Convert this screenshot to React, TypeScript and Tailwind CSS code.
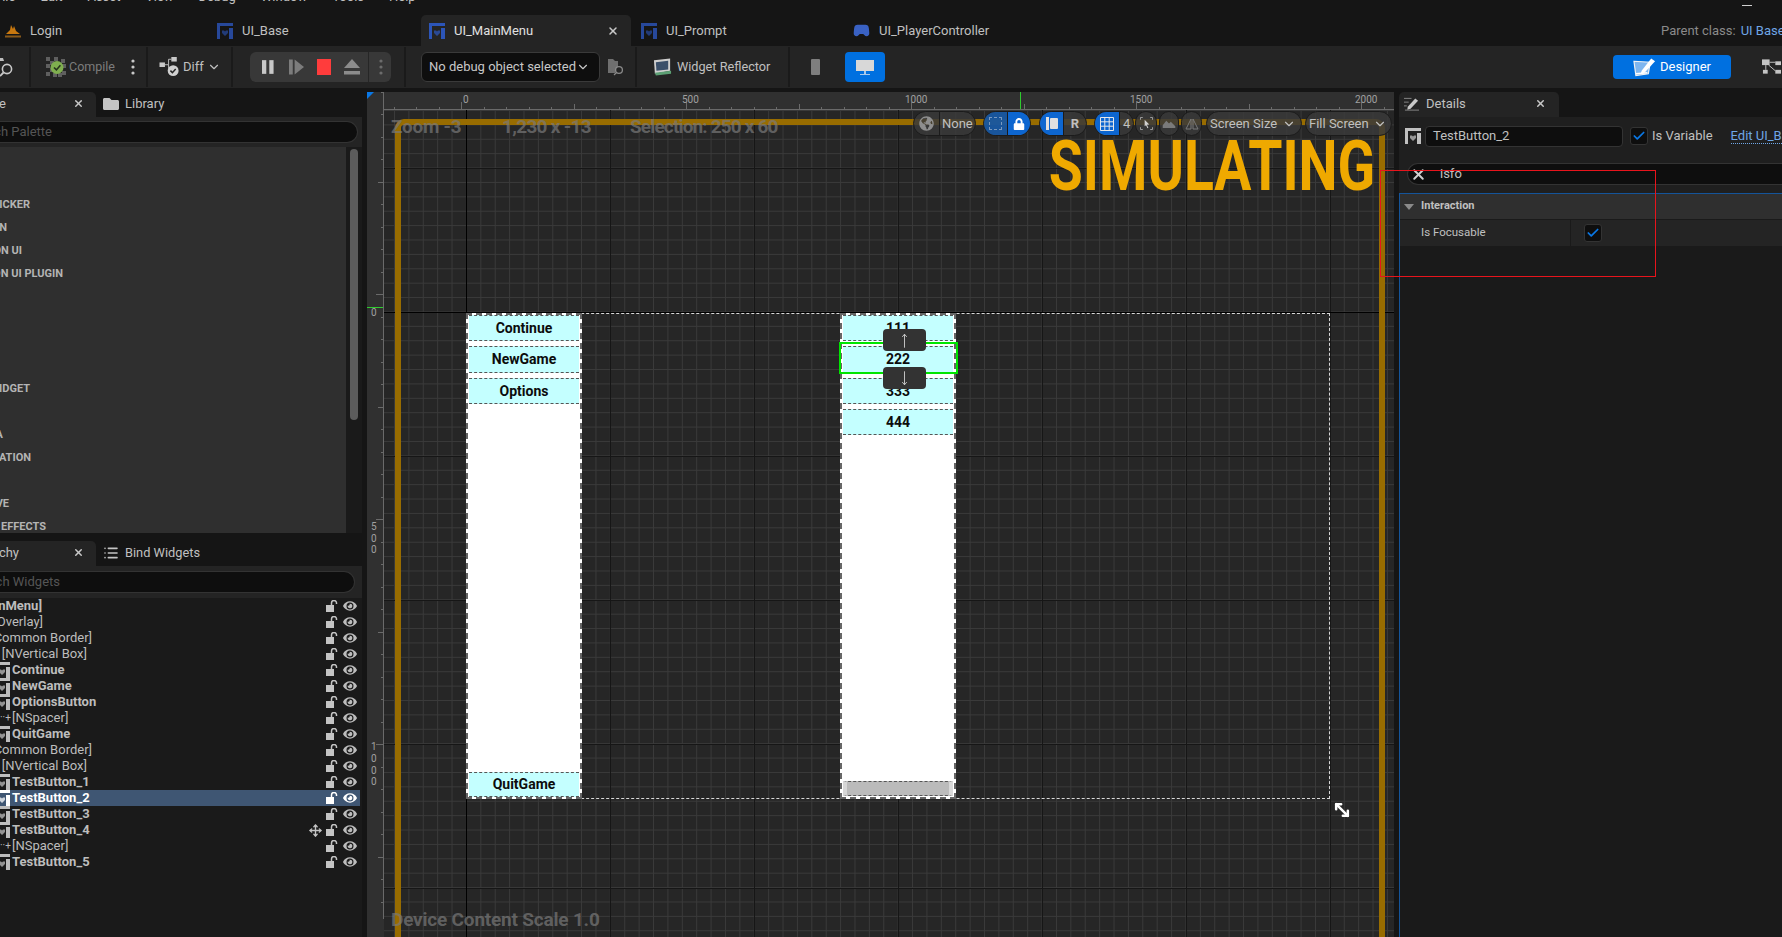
import React from "react";
import { Check, ChevronDown, Gamepad2, List, Move, MoveDiagonal2, X } from "lucide-react";
import { FaEye, FaFolder, FaGlobeAmericas, FaLock } from "react-icons/fa";

const WidgetIcon = ({ color, className }: { color: string; className?: string }) => (
  <svg viewBox="0 0 16 16" className={className} fill={color}>
    <rect x="0" y="0" width="16" height="3" />
    <rect x="0" y="3" width="3" height="13" />
    <rect x="12" y="5" width="4" height="11" />
    <path d="M5 7.5h2l1 1 1-1h2v2.5l-3 3-3-3z" opacity="0.75" />
  </svg>
);

const LoginIcon = () => (
  <svg viewBox="0 0 16 14" className="h-[14px] w-[16px] shrink-0">
    <path d="M1 10 5 6l1-5 2 4 1-3 2 5 4 3z" fill="#c8780f" />
    <rect x="0" y="11.5" width="16" height="2" fill="#8a5a1a" />
  </svg>
);

const OpenLock = ({ color }: { color: string }) => (
  <svg viewBox="0 0 12 12" className="h-[12px] w-[12px] shrink-0">
    <rect x="0" y="5" width="8" height="7" fill={color} />
    <path d="M5.500 5V3a2.500 2.500 0 0 1 5 0v1" fill="none" stroke={color} strokeWidth="1.5" />
  </svg>
);

const TopTab = ({ label, icon, width, active }: { label: string; icon: React.ReactNode; width: string; active?: boolean }) => (
  <div className={`${width} flex h-full shrink-0 items-center gap-[9px] rounded-t-[5px] pl-[8px] ${active ? "bg-[#242424] text-[#e0e0e0]" : "text-[#c0c0c0]"}`}>
    {icon}
    <span className="whitespace-nowrap">{label}</span>
    {active && <X size={12} strokeWidth={3} className="ml-auto mr-[12px] text-[#c8c8c8]" />}
  </div>
);

const Sep = () => <div className="h-[40px] w-[2px] shrink-0 bg-[#1a1a1a]" />;

const CompileIcon = () => (
  <svg viewBox="0 0 20 20" className="h-[20px] w-[20px] shrink-0">
    {[[0, 0], [8, 0], [15, 2], [0, 7], [4, 4], [4, 11], [0, 15], [7, 16], [12, 16], [16, 14], [16, 7]].map(([x, y], i) => (
      <rect key={i} x={x} y={y} width="4" height="4" fill="#5f5f5f" />
    ))}
    <circle cx="11" cy="10.5" r="6.5" fill="#7fae4f" />
    <path d="M8 10.5l2.4 2.4 4-4.6" fill="none" stroke="#26331c" strokeWidth="1.6" />
  </svg>
);

const DiffIcon = () => (
  <svg viewBox="0 0 22 22" className="h-[20px] w-[21px] shrink-0">
    <rect x="0" y="6" width="6" height="5" fill="#c8c8c8" />
    <rect x="13" y="0" width="6" height="5" fill="#c8c8c8" />
    <path d="M6 8.5h4V2.5h3M10 8.5v4" fill="none" stroke="#c8c8c8" />
    <circle cx="15" cy="15" r="6" fill="#d0d0d0" />
    <path d="M12 15l2.2 2.2 3.6-4" fill="none" stroke="#242424" strokeWidth="1.6" />
  </svg>
);

const Dots = ({ color }: { color: string }) => (
  <svg viewBox="0 0 4 16" className="h-[16px] w-[4px] shrink-0" fill={color}>
    <circle cx="2" cy="2" r="1.6" />
    <circle cx="2" cy="8" r="1.6" />
    <circle cx="2" cy="14" r="1.6" />
  </svg>
);

const FolderSearch = () => (
  <svg viewBox="0 0 16 18" className="h-[18px] w-[16px] shrink-0">
    <path d="M0 1h5l2 2h3v6l-3 6H0z" fill="#6f6f6f" />
    <circle cx="11" cy="12" r="3.4" fill="#242424" stroke="#8a8a8a" strokeWidth="1.3" />
    <path d="M8.5 14.5 6 17" stroke="#8a8a8a" strokeWidth="1.3" />
  </svg>
);

const ReflectorIcon = () => (
  <svg viewBox="0 0 20 18" className="h-[18px] w-[19px] shrink-0">
    <path d="M1 2l17-2v13l-16 3z" fill="#cfcfcf" />
    <path d="M3 4l13-1.5v9L3.6 13z" fill="#3a4f6a" />
    <path d="M2 15l17-2 0 3-16 2z" fill="#5ca074" />
  </svg>
);

const DesignerIcon = () => (
  <svg viewBox="0 0 24 20" className="h-[20px] w-[23px] shrink-0">
    <path d="M1 4l17 1-2 12-13 2z" fill="#7fb6ef" stroke="#f2f2f2" strokeWidth="1.2" />
    <path d="M9 14 19 1l4 3-11 12-4 1z" fill="#ffffff" />
    <path d="M3 17l12-1" stroke="#ffffff" strokeWidth="1.4" />
  </svg>
);

const GraphIcon = () => (
  <svg viewBox="0 0 20 16" className="h-[16px] w-[19px] shrink-0" fill="#c4c4c4">
    <rect x="0" y="0" width="8" height="6" />
    <rect x="14" y="2" width="6" height="4" />
    <rect x="14" y="11" width="6" height="4" />
    <rect x="1" y="11" width="5" height="4" />
    <path d="M8 3h6M4 6v5M7 6l7 6" stroke="#c4c4c4" fill="none" />
  </svg>
);

const PanelTab = ({ label, end }: { label: string; end: string }) => (
  <div className="flex h-full w-[96px] shrink-0 items-center rounded-tr-[5px] bg-[#242424] pb-[2px]">
    <div className={`flex ${end} shrink-0 justify-end whitespace-nowrap text-[#c0c0c0]`}>{label}</div>
    <X size={11} strokeWidth={3.2} className="ml-auto mr-[12px] text-[#c8c8c8]" />
  </div>
);

const paletteRows: [string, string][] = [
  ["", ""], ["", ""],
  ["COLOR PICKER", "w-[30px]"],
  ["COMMON", "w-[7px]"],
  ["COMMON UI", "w-[22px]"],
  ["COMMON UI PLUGIN", "w-[63px]"],
  ["", ""], ["", ""], ["", ""], ["", ""],
  ["WIDGET", "w-[30px]"],
  ["", ""],
  ["MEDIA", "w-[3px]"],
  ["OPTIMIZATION", "w-[31px]"],
  ["", ""],
  ["PRIMITIVE", "w-[9px]"],
  ["SPECIAL EFFECTS", "w-[46px]"],
];

type Row = { t: string; end?: string; kind: "plain" | "btn" | "spacer"; bold?: boolean; sel?: boolean; move?: boolean };
const treeRows: Row[] = [
  { t: "[UI_MainMenu]", end: "w-[42px]", kind: "plain", bold: true },
  { t: "[NOverlay]", end: "w-[43px]", kind: "plain" },
  { t: "[NCommon Border]", end: "w-[92px]", kind: "plain" },
  { t: "[NVertical Box]", end: "w-[87px]", kind: "plain" },
  { t: "Continue", kind: "btn" },
  { t: "NewGame", kind: "btn" },
  { t: "OptionsButton", kind: "btn" },
  { t: "[NSpacer]", kind: "spacer" },
  { t: "QuitGame", kind: "btn" },
  { t: "[NCommon Border]", end: "w-[92px]", kind: "plain" },
  { t: "[NVertical Box]", end: "w-[87px]", kind: "plain" },
  { t: "TestButton_1", kind: "btn" },
  { t: "TestButton_2", kind: "btn", sel: true },
  { t: "TestButton_3", kind: "btn" },
  { t: "TestButton_4", kind: "btn", move: true },
  { t: "[NSpacer]", kind: "spacer" },
  { t: "TestButton_5", kind: "btn" },
];

const TreeRow = ({ r }: { r: Row }) => (
  <div className={`flex h-[16px] w-[360px] items-center ${r.sel ? "bg-[#3f5673] text-white" : "text-[#bdbdbd]"}`}>
    {r.kind === "plain" && (
      <div className={`flex ${r.end} shrink-0 justify-end whitespace-nowrap ${r.bold ? "font-bold" : ""}`}>{r.t}</div>
    )}
    {r.kind === "btn" && (
      <>
        <WidgetIcon color={r.sel ? "#ffffff" : "#bdbdbd"} className="ml-[-6px] mr-[2px] h-[16px] w-[16px] shrink-0" />
        <span className="whitespace-nowrap font-bold">{r.t}</span>
      </>
    )}
    {r.kind === "spacer" && (
      <>
        <span className="w-[12px] shrink-0 text-[10px] leading-none text-[#bdbdbd]">··+</span>
        <span className="whitespace-nowrap">{r.t}</span>
      </>
    )}
    <div className="ml-auto flex items-center gap-[5px] pr-[3px]">
      {r.move && <Move size={13} strokeWidth={2.6} className="mr-[-1px] text-[#c4c4c4]" />}
      <OpenLock color={r.sel ? "#ffffff" : "#c4c4c4"} />
      <FaEye size={14} className={r.sel ? "text-white" : "text-[#bcbcbc]"} />
    </div>
  </div>
);

const TopRuler = () => {
  const ticks = Array.from({ length: 46 }, (_, i) => i);
  return (
    <svg className="absolute left-0 top-0 h-[18px] w-[1027px]" viewBox="0 0 1027 18">
      <rect x="17" y="17" width="1010" height="1" fill="#6a6a6a" />
      {ticks.map((i) => {
        const x = 9.5 + 22.5 * i + 17 + 0;
        const unit = i - 3;
        const tall = unit % 10 === 0;
        const mid = unit % 5 === 0;
        return <rect key={i} x={Math.round(x)} y={tall ? 10 : mid ? 12 : 15} width="1" height={tall ? 7 : mid ? 5 : 2} fill="#6a6a6a" />;
      })}
      <rect x="653" y="0" width="1" height="17" fill="#2ecc2e" />
    </svg>
  );
};

const LeftRuler = () => {
  const ticks = Array.from({ length: 38 }, (_, i) => i);
  return (
    <svg className="absolute left-0 top-0 h-[827px] w-[17px]" viewBox="0 0 17 827">
      <rect x="16" y="0" width="1" height="827" fill="#6a6a6a" />
      <rect x="0" y="215" width="16" height="1" fill="#2ecc2e" />
      {ticks.map((i) => {
        const y = 22 - 22.5 + 22.5 * i;
        const unit = i - 9;
        const tall = unit % 10 === 0;
        const mid = unit % 5 === 0;
        return <rect key={i} x={tall ? 9 : mid ? 11 : 14} y={Math.round(y)} width={tall ? 8 : mid ? 6 : 3} height="1" fill="#6a6a6a" />;
      })}
    </svg>
  );
};

const Pill = ({ width, children }: { width: string; children: React.ReactNode }) => (
  <div className={`${width} flex h-[25px] shrink-0 items-center overflow-hidden rounded-full border border-[#1b1b1b] bg-[#3a3a3a]/85 text-[#c0c0c0]`}>
    {children}
  </div>
);

const CanvasButton = ({ label, cls }: { label: string; cls: string }) => (
  <div className={`${cls} flex shrink-0 items-center justify-center border-y border-dashed border-[#555] bg-[#c4ffff] text-[14px] font-bold text-[#0c0c0c]`}>
    {label}
  </div>
);

const overlayText = "absolute whitespace-nowrap text-[19px] font-bold leading-[22px] text-[#7a7a7a]/70";

export default function App() {
  return (
    <div className="relative flex h-[937px] w-[1782px] flex-col overflow-hidden bg-[#151515] text-[13px] [font-family:Roboto,sans-serif]">
      <header className="relative h-[46px] shrink-0 bg-[#151515]">
        <div className="flex h-[15px] gap-[25px] overflow-hidden text-[#c0c0c0]">
          {["File", "Edit", "Asset", "View", "Debug", "Window", "Tools", "Help"].map((m, i) => (
            <span key={m} className={`${i === 0 ? "ml-[-5px]" : ""} mt-[-11px] leading-[16px]`}>{m}</span>
          ))}
        </div>
        <div className="absolute right-[30px] top-[5px] h-px w-[10px] bg-[#d0d0d0]" />
        <div className="flex h-[31px] items-center">
          <TopTab width="w-[209px] !pl-[5px]" label="Login" icon={<LoginIcon />} />
          <TopTab width="w-[212px]" label="UI_Base" icon={<WidgetIcon color="#27489a" className="h-[16px] w-[16px] shrink-0" />} />
          <TopTab width="w-[210px]" active label="UI_MainMenu" icon={<WidgetIcon color="#2c55b8" className="h-[16px] w-[16px] shrink-0" />} />
          <div className="w-[2px] shrink-0" />
          <TopTab width="w-[213px]" label="UI_Prompt" icon={<WidgetIcon color="#27489a" className="h-[16px] w-[16px] shrink-0" />} />
          <div className="flex h-full items-center gap-[9px] pl-[7px] text-[#c0c0c0]">
            <Gamepad2 size={17} fill="#3a62c4" className="text-[#3a62c4]" />
            <span>UI_PlayerController</span>
          </div>
          <div className="ml-auto flex w-[121px] shrink-0 gap-[5px] whitespace-nowrap">
            <span className="text-[#8a8a8a]">Parent class:</span>
            <span className="text-[#6fa6e6]">UI Base</span>
          </div>
        </div>
      </header>

      <div className="flex h-[42px] shrink-0 items-center bg-[#242424] text-[#c0c0c0]">
        <div className="flex w-[29px] shrink-0 items-center overflow-hidden">
          <svg viewBox="0 0 16 22" className="h-[22px] w-[16px] shrink-0">
            <path d="M0 2h3l1 3H0z" fill="#bdbdbd" />
            <circle cx="7" cy="13" r="4.6" fill="none" stroke="#c8c8c8" strokeWidth="1.6" />
            <path d="M3.5 16.500 0 20" stroke="#c8c8c8" strokeWidth="1.8" />
          </svg>
        </div>
        <Sep />
        <div className="flex w-[115px] shrink-0 items-center gap-[3px] pl-[15px] text-[12.5px] text-[#7c7c7c]">
          <CompileIcon />
          <span>Compile</span>
          <span className="ml-[13px]"><Dots color="#c8c8c8" /></span>
        </div>
        <Sep />
        <div className="flex w-[83px] shrink-0 items-center pl-[11px]">
          <DiffIcon />
          <span className="ml-[3px]">Diff</span>
          <ChevronDown size={14} strokeWidth={2} className="ml-[3px]" />
        </div>
        <Sep />
        <div className="flex w-[171px] shrink-0 items-center pl-[17px]">
          <div className="flex h-[30px] w-[141px] items-center rounded-[6px] bg-[#383838]">
            <svg viewBox="0 0 14 16" className="ml-[12px] h-[16px] w-[12px] shrink-0" fill="#c8c8c8">
              <rect x="0" y="0" width="5" height="16" />
              <rect x="8.5" y="0" width="5" height="16" />
            </svg>
            <svg viewBox="0 0 16 16" className="ml-[15px] h-[16px] w-[15px] shrink-0" fill="#7c7c7c">
              <rect x="0" y="0" width="4" height="16" />
              <path d="M6 0l10 8-10 8z" />
            </svg>
            <div className="ml-[13px] h-[16px] w-[14px] shrink-0 bg-[#ff3c3c]" />
            <svg viewBox="0 0 16 16" className="ml-[13px] h-[16px] w-[16px] shrink-0" fill="#8c8c8c">
              <path d="M8 0l8 9H0z" />
              <rect x="0" y="12" width="16" height="3.5" />
            </svg>
            <div className="ml-[8px] h-full w-px shrink-0 bg-[#262626]" />
            <span className="ml-[10px]"><Dots color="#6c6c6c" /></span>
          </div>
        </div>
        <Sep />
        <div className="flex w-[229px] shrink-0 items-center pl-[15px]">
          <div className="flex h-[30px] w-[179px] items-center justify-between rounded-[6px] border border-[#3a3a3a] bg-[#0e0e0e] pl-[7px] pr-[9px] text-[#c8c8c8]">
            <span className="whitespace-nowrap">No debug object selected</span>
            <ChevronDown size={14} strokeWidth={2} />
          </div>
          <span className="ml-[8px]"><FolderSearch /></span>
        </div>
        <Sep />
        <div className="flex w-[151px] shrink-0 items-center gap-[5px] pl-[16px]">
          <ReflectorIcon />
          <span className="whitespace-nowrap text-[12.7px]">Widget Reflector</span>
        </div>
        <Sep />
        <div className="flex items-center pl-[21px]">
          <div className="h-[16px] w-[9px] rounded-[1px] bg-[#7e7e7e]" />
          <div className="ml-[25px] flex h-[30px] w-[40px] items-center justify-center rounded-[4px] bg-[#0070e0]">
            <svg viewBox="0 0 18 15" className="h-[15px] w-[18px]">
              <rect x="0" y="0" width="18" height="11" fill="#d8d8d8" />
              <rect x="8" y="11" width="2" height="3" fill="#a8c8ea" />
              <rect x="4" y="14" width="10" height="1" fill="#a8c8ea" />
            </svg>
          </div>
        </div>
        <div className="ml-auto flex items-center">
          <div className="flex h-[24px] w-[118px] items-center justify-center gap-[4px] rounded-[4px] bg-[#0070e0] text-white">
            <DesignerIcon />
            <span>Designer</span>
          </div>
          <div className="ml-[31px] mr-[1px]"><GraphIcon /></div>
        </div>
      </div>

      <main className="flex min-h-0 flex-1 gap-[5px] pt-[4px]">
        <aside className="flex w-[362px] shrink-0 flex-col">
          <section className="flex h-[441px] shrink-0 flex-col">
            <div className="flex h-[25px] shrink-0 items-center">
              <PanelTab label="Palette" end="w-[6px]" />
              <div className="flex items-center gap-[6px] pb-[2px] pl-[7px] text-[#c0c0c0]">
                <FaFolder size={16} className="text-[#c4c4c4]" />
                <span>Library</span>
              </div>
            </div>
            <div className="flex h-[30px] shrink-0 items-center bg-[#242424] pr-[4px]">
              <div className="flex h-[22px] w-full items-center rounded-r-full border border-l-0 border-[#333] bg-[#0e0e0e]">
                <div className="flex w-[52px] shrink-0 justify-end whitespace-nowrap text-[#555]">Search Palette</div>
              </div>
            </div>
            <div className="flex min-h-0 flex-1">
              <div className="w-[346px] shrink-0 bg-[#2f2f2f] pt-[1px]">
                {paletteRows.map(([t, end], i) => (
                  <div key={i} className="flex h-[23px] items-center text-[11px] font-bold text-[#b4b4b4]">
                    {t && <div className={`flex ${end} shrink-0 justify-end whitespace-nowrap`}>{t}</div>}
                  </div>
                ))}
              </div>
              <div className="flex-1 bg-[#1a1a1a] pl-[4px] pt-[2px]">
                <div className="h-[271px] w-[8px] rounded-full bg-[#5c5c5c]" />
              </div>
            </div>
          </section>
          <section className="mt-[8px] flex min-h-0 flex-1 flex-col">
            <div className="flex h-[25px] shrink-0 items-center">
              <PanelTab label="Hierarchy" end="w-[19px]" />
              <div className="flex items-center gap-[6px] pb-[2px] pl-[7px] text-[#c0c0c0]">
                <List size={16} strokeWidth={2.4} className="text-[#c4c4c4]" />
                <span className="text-[12.8px]">Bind Widgets</span>
              </div>
            </div>
            <div className="flex h-[32px] shrink-0 items-center bg-[#242424] pr-[7px]">
              <div className="flex h-[22px] w-full items-center rounded-r-full border border-l-0 border-[#333] bg-[#0e0e0e]">
                <div className="flex w-[60px] shrink-0 justify-end whitespace-nowrap text-[#555]">Search Widgets</div>
              </div>
            </div>
            <div className="flex-1 bg-[#1a1a1a]">
              {treeRows.map((r, i) => <TreeRow key={i} r={r} />)}
            </div>
          </section>
        </aside>

        <section className="relative w-[1027px] shrink-0 overflow-hidden bg-[#303030]">
          <TopRuler />
          <LeftRuler />
          <div className="absolute left-0 top-0 h-0 w-0 border-r-[7px] border-t-[7px] border-r-transparent border-t-[#0a78e6]" />
          {[["0", "left-[96px]"], ["500", "left-[315px]"], ["1000", "left-[538px]"], ["1500", "left-[763px]"], ["2000", "left-[988px]"]].map(([t, c]) => (
            <span key={t} className={`absolute top-[2px] text-[10px] leading-[12px] text-[#a0a0a0] ${c}`}>{t}</span>
          ))}
          {[["0", "top-[215px]"], ["5", "top-[429px]"], ["0", "top-[441px]"], ["0", "top-[452px]"], ["1", "top-[649px]"], ["0", "top-[661px]"], ["0", "top-[673px]"], ["0", "top-[684px]"]].map(([t, c], i) => (
            <span key={i} className={`absolute left-[4px] text-[10px] leading-[12px] text-[#a0a0a0] ${c}`}>{t}</span>
          ))}
          <div className="absolute bottom-0 left-[17px] right-0 top-[18px] overflow-hidden bg-[#262626] [background-image:linear-gradient(to_right,#161616_1px,transparent_1px),linear-gradient(to_bottom,#161616_1px,transparent_1px),linear-gradient(to_right,#3a3a3a_1px,transparent_1px),linear-gradient(to_bottom,#3a3a3a_1px,transparent_1px)] [background-position:82px_58px,82px_58px,10px_0px,10px_0px] [background-size:144px_144px,144px_144px,14.4px_14.4px,14.4px_14.4px]">
            <div className="absolute bottom-0 left-[82px] top-0 w-px bg-black" />
            <div className="absolute left-0 right-0 top-[202px] h-px bg-black" />
            <div className="absolute left-[11px] top-[9px] h-[900px] w-[990px] rounded-t-[9px] border-[6px] border-[#986c00]" />

            <div className="absolute left-[82px] top-[203px] h-[486px] w-[864px] border border-dashed border-[#d8d8d8]" />
            <div className="absolute left-[82px] top-[203px] flex h-[486px] w-[116px] flex-col border-2 border-dashed border-[#666] bg-white px-[1px]">
              <CanvasButton cls="h-[26px]" label="Continue" />
              <div className="h-[5px] shrink-0" />
              <CanvasButton cls="h-[27px]" label="NewGame" />
              <div className="h-[5px] shrink-0" />
              <CanvasButton cls="h-[26px]" label="Options" />
              <div className="flex-1" />
              <CanvasButton cls="h-[25px]" label="QuitGame" />
            </div>
            <div className="absolute left-[456px] top-[203px] flex h-[486px] w-[116px] flex-col border-2 border-dashed border-[#666] bg-white px-[1px]">
              <CanvasButton cls="h-[26px]" label="111" />
              <div className="h-[5px] shrink-0" />
              <CanvasButton cls="h-[27px]" label="222" />
              <div className="h-[5px] shrink-0" />
              <CanvasButton cls="h-[26px]" label="333" />
              <div className="h-[5px] shrink-0" />
              <CanvasButton cls="h-[26px]" label="444" />
              <div className="flex-1" />
              <div className="mb-[1px] h-[15px] shrink-0 border-x-[4px] border-y border-dashed border-x-[#d8d8d8] border-y-[#555] bg-[#bbbbbb]" />
            </div>
            <div className="absolute left-[455px] top-[232px] h-[32px] w-[119px] border-2 border-[#00e600]" />
            <div className="absolute left-[499px] top-[219px] flex h-[22px] w-[43px] items-center justify-center rounded-[4px] bg-[#333333]">
              <svg viewBox="0 0 10 16" className="h-[15px] w-[9px]"><path d="M5 16V1M2.5 4 5 1l2.5 3" stroke="#d0d0d0" fill="none" /></svg>
            </div>
            <div className="absolute left-[499px] top-[257px] flex h-[22px] w-[43px] items-center justify-center rounded-[4px] bg-[#333333]">
              <svg viewBox="0 0 10 16" className="h-[15px] w-[9px]"><path d="M5 0v15M2.5 12 5 15l2.5-3" stroke="#d0d0d0" fill="none" /></svg>
            </div>
            <MoveDiagonal2 size={20} strokeWidth={3} className="absolute left-[948px] top-[690px] text-white" />

            <span className={`${overlayText} left-[7px] top-[6px] tracking-[-0.3px]`}>Zoom -3</span>
            <span className={`${overlayText} left-[118px] top-[6px] tracking-[-0.7px]`}>1,230 x -13</span>
            <span className={`${overlayText} left-[246px] top-[6px] tracking-[-0.85px]`}>Selection: 250 x 60</span>
            <span className={`${overlayText} left-[7px] top-[799px] tracking-[-0.2px]`}>Device Content Scale 1.0</span>

            <span className="absolute right-[19px] top-[16px] origin-right scale-x-[0.79] whitespace-nowrap text-[70px] font-bold leading-[80px] text-[#efa900]">SIMULATING</span>

            <div className="absolute left-[529px] top-[1px] flex items-center">
              <Pill width="w-[63px]">
                <div className="flex h-full w-[26px] shrink-0 items-center justify-center border-r border-[#1b1b1b]"><FaGlobeAmericas size={15} className="text-[#8e8e8e]" /></div>
                <span className="ml-[2px]">None</span>
              </Pill>
              <div className="ml-[7px]">
                <Pill width="w-[48px]">
                  <div className="flex h-full w-[24px] shrink-0 items-center justify-center border-r border-[#1b1b1b] bg-[#0d62c6]/70">
                    <div className="h-[13px] w-[13px] border border-dashed border-[#7a9ac0]" />
                  </div>
                  <div className="flex h-full flex-1 items-center justify-center bg-[#0d66d0]"><FaLock size={12} className="text-white" /></div>
                </Pill>
              </div>
              <div className="ml-[8px]">
                <Pill width="w-[48px]">
                  <div className="flex h-full w-[24px] shrink-0 items-center justify-center gap-[1px] border-r border-[#1b1b1b] bg-[#0d66d0]">
                    <div className="h-[13px] w-[3px] bg-[#e0e0e0]" />
                    <div className="h-[11px] w-[8px] rounded-[1px] bg-[#e0e0e0]" />
                  </div>
                  <span className="flex-1 text-center text-[13px] font-bold">R</span>
                </Pill>
              </div>
              <div className="ml-[7px]">
                <Pill width="w-[40px]">
                  <div className="flex h-full w-[25px] shrink-0 items-center justify-center border-r border-[#1b1b1b] bg-[#0d66d0]">
                    <svg viewBox="0 0 14 14" className="h-[14px] w-[14px]" fill="none" stroke="#e8e8e8"><path d="M.5.5h13v13H.5zM4.8.5v13M9.2.5v13M.5 4.8h13M.5 9.2h13" /></svg>
                  </div>
                  <span className="ml-[3px]">4</span>
                </Pill>
              </div>
              <div className="ml-[1px]">
                <Pill width="w-[22px]">
                  <svg viewBox="0 0 14 14" className="mx-auto h-[13px] w-[13px]" fill="none" stroke="#a8a8a8"><path d="M.5 3V.5H3M11 .5h2.5V3M.5 11v2.5H3M11 13.5h2.5V11" /><path d="M5 3l5 5-2.500.3L9 11.500l-1 .5-1.500-3L5 10z" fill="#d0d0d0" stroke="none" /></svg>
                </Pill>
              </div>
              <div className="ml-[2px]">
                <Pill width="w-[20px]">
                  <svg viewBox="0 0 14 10" className="mx-auto h-[9px] w-[14px]" fill="#7a7a7a"><path d="M0 10V7l4-5 3 3 2-2 5 5v2z" /></svg>
                </Pill>
              </div>
              <div className="ml-[2px]">
                <Pill width="w-[21px]">
                  <svg viewBox="0 0 14 12" className="mx-auto h-[12px] w-[14px]" fill="none" stroke="#7a7a7a"><path d="M6 1v10H1zM8 1v10h5z" /></svg>
                </Pill>
              </div>
              <div className="ml-[4px]">
                <Pill width="w-[96px]">
                  <span className="ml-[3px] whitespace-nowrap">Screen Size</span>
                  <ChevronDown size={14} strokeWidth={2} className="ml-[5px] shrink-0" />
                </Pill>
              </div>
              <div className="ml-[3px]">
                <Pill width="w-[87px]">
                  <span className="ml-[3px] whitespace-nowrap">Fill Screen</span>
                  <ChevronDown size={14} strokeWidth={2} className="ml-[4px] shrink-0" />
                </Pill>
              </div>
            </div>
          </div>
        </section>

        <aside className="flex min-w-0 flex-1 flex-col">
          <div className="flex h-[25px] shrink-0">
            <div className="flex h-full w-[160px] items-center gap-[7px] rounded-t-[5px] bg-[#242424] pb-[2px] pl-[5px] text-[#c0c0c0]">
              <svg viewBox="0 0 16 14" className="h-[14px] w-[15px] shrink-0">
                <path d="M0 1h8M0 5h5M0 9h3" stroke="#8a8a8a" />
                <path d="M4 10 12 1l3 2.500-8 8.500-3.500 1z" fill="#c8c8c8" />
                <path d="M1 13.500h15" stroke="#8a8a8a" />
              </svg>
              <span>Details</span>
              <X size={11} strokeWidth={3.2} className="ml-auto mr-[13px] text-[#c8c8c8]" />
            </div>
          </div>
          <div className="flex h-[76px] shrink-0 flex-col bg-[#1f1f1f] text-[#c0c0c0]">
            <div className="flex h-[37px] shrink-0 items-center pl-[6px] pt-[1px]">
              <WidgetIcon color="#c0c0c0" className="h-[16px] w-[16px] shrink-0" />
              <div className="ml-[4px] flex h-[21px] w-[198px] shrink-0 items-center rounded-[4px] border border-[#333] bg-[#0e0e0e] pl-[7px]">TestButton_2</div>
              <div className="ml-[7px] flex h-[18px] w-[18px] shrink-0 items-center justify-center rounded-[3px] border border-[#333] bg-[#0e0e0e]">
                <Check size={14} strokeWidth={3} className="text-[#0a78e6]" />
              </div>
              <span className="ml-[4px] whitespace-nowrap">Is Variable</span>
              <span className="ml-[18px] whitespace-nowrap border-b border-dotted border-[#6fa6e6] leading-[15px] text-[#6fa6e6]">Edit UI_Base</span>
            </div>
            <div className="pl-[8px] pt-[9px]">
              <div className="flex h-[22px] items-center rounded-l-full border border-r-0 border-[#333] bg-[#0e0e0e] pl-[2px]">
                <X size={17} strokeWidth={2.8} className="text-[#d0d0d0]" />
                <span className="ml-[13px]">isfo</span>
              </div>
            </div>
          </div>
          <div className="flex min-h-0 flex-1 flex-col border-l border-t border-[#14549a] bg-[#1a1a1a] text-[#c0c0c0]">
            <div className="flex h-[26px] shrink-0 items-center border-b border-[#1a1a1a] bg-[#2f2f2f] pl-[4px]">
              <div className="h-0 w-0 border-x-[5px] border-t-[6px] border-x-transparent border-t-[#8a8a8a]" />
              <span className="ml-[7px] text-[11px] font-bold">Interaction</span>
            </div>
            <div className="flex h-[26px] shrink-0 items-center bg-[#242424]">
              <span className="w-[171px] shrink-0 border-r border-[#1a1a1a] pb-[1px] pl-[21px] text-[11.5px] leading-[25px]">Is Focusable</span>
              <div className="ml-[13px] flex h-[18px] w-[18px] shrink-0 items-center justify-center rounded-[3px] border border-[#333] bg-[#0e0e0e]">
                <Check size={14} strokeWidth={3} className="text-[#0a78e6]" />
              </div>
            </div>
          </div>
        </aside>
      </main>

      <div className="pointer-events-none absolute left-[1380px] top-[170px] h-[107px] w-[276px] border border-[#e8141c]" />
    </div>
  );
}
